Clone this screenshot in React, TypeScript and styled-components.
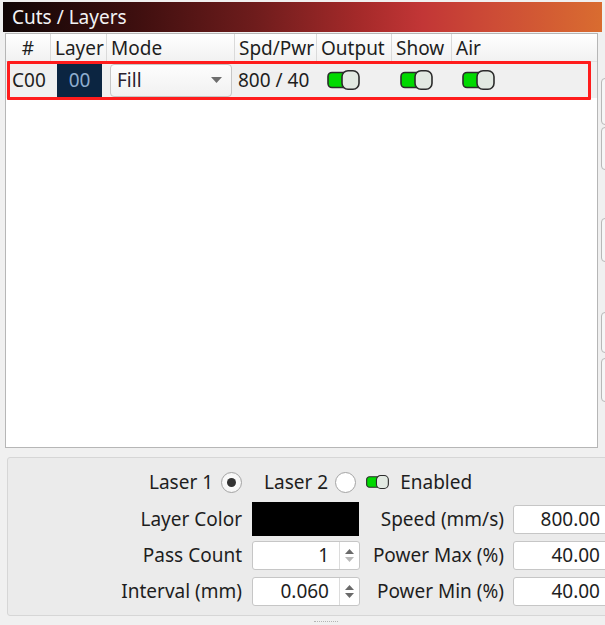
import React from "react";
import styled, { createGlobalStyle } from "styled-components";

const Global = createGlobalStyle`
  html, body { margin: 0; padding: 0; background: #f0f0f0; }
  body { font-family: "Noto Sans", "Open Sans", sans-serif; color: #1e1e1e; }
  * { box-sizing: border-box; }
`;

const Page = styled.div`
  width: 605px;
  height: 625px;
  overflow: hidden;
  background: #f0f0f0;
  padding-top: 2px;
  font-size: 19px;
`;

const TitleBar = styled.div`
  margin-left: 3px;
  width: 599px;
  height: 30px;
  padding-left: 9px;
  display: flex;
  align-items: center;
  color: #f2f2f4;
  font-size: 19px;
  background: linear-gradient(
    to right,
    #100606 0%,
    #3e0f0f 22%,
    #6e1c1c 42%,
    #a62a2a 60%,
    #c23636 70%,
    #cd4c36 82%,
    #d96c30 100%
  );
`;

const Middle = styled.div`
  display: flex;
  margin-top: 1px;
`;

const Table = styled.div`
  position: relative;
  flex-shrink: 0;
  margin-left: 5px;
  width: 593px;
  height: 415px;
  border: 1px solid #b6b6b6;
  background: #ffffff;
  display: flex;
  flex-direction: column;
`;

const COLS = "45px 56px 128px 82px 75px 60px 1fr";

const HeaderRow = styled.div`
  display: grid;
  grid-template-columns: ${COLS};
  height: 28px;
  background: linear-gradient(#ffffff, #f1f1f1);
  border-bottom: 1px solid #e2e2e2;
`;

const HeadCell = styled.div<{ $center?: boolean }>`
  border-right: 1px solid #dadada;
  padding-left: ${(p) => (p.$center ? 0 : 4)}px;
  text-align: ${(p) => (p.$center ? "center" : "left")};
  line-height: 28px;
  white-space: nowrap;
  overflow: hidden;
  &:last-child { border-right: none; }
`;

const DataRow = styled.div`
  display: grid;
  grid-template-columns: ${COLS};
  height: 36px;
  align-items: center;
  background: #f0f0f0;
`;

const Cell = styled.div<{ $pl?: number }>`
  padding-left: ${(p) => p.$pl ?? 0}px;
  display: flex;
  align-items: center;
  white-space: nowrap;
`;

const LayerBox = styled.div`
  width: 45px;
  height: 35px;
  background: #0b2541;
  color: #8fadcf;
  display: flex;
  align-items: center;
  justify-content: center;
`;

const Combo = styled.div`
  width: 122px;
  height: 33px;
  border: 1px solid #c6c6c6;
  border-radius: 4px;
  background: linear-gradient(#fdfdfd, #f1f1f1);
  display: flex;
  align-items: center;
  justify-content: space-between;
  padding: 0 9px 0 6px;
  color: #2a2230;
`;

const Highlight = styled.div`
  position: absolute;
  left: 1px;
  top: 27px;
  width: 584px;
  height: 39px;
  border: 3px solid #ff1c1c;
  border-radius: 1px;
  pointer-events: none;
`;

const SideStrip = styled.div`
  flex-shrink: 0;
  margin-left: 3px;
  display: flex;
  flex-direction: column;
`;

const SideButton = styled.div<{ $h: number; $mt: number }>`
  width: 30px;
  height: ${(p) => p.$h}px;
  margin-top: ${(p) => p.$mt}px;
  border: 1px solid #b8b8b8;
  border-radius: 4px;
  background: #f6f6f6;
`;

const Panel = styled.div`
  margin-top: 9px;
  margin-left: 7px;
  width: 620px;
  height: 159px;
  background: #ebebeb;
  border: 1px solid #d6d6d6;
  border-radius: 3px;
  padding-top: 13px;
`;

const LaserRow = styled.div`
  display: flex;
  align-items: center;
  height: 22px;
  padding-left: 141px;
`;

const Label = styled.span<{ $mr: number }>`
  margin-right: ${(p) => p.$mr}px;
  white-space: nowrap;
  display: flex;
  align-items: center;
`;

const Radio = styled.div<{ $checked?: boolean; $mr: number }>`
  width: 21px;
  height: 21px;
  border-radius: 50%;
  border: 1px solid #a4a4a4;
  background: ${(p) => (p.$checked ? "radial-gradient(#ffffff, #f2f2f2)" : "#ffffff")};
  margin-right: ${(p) => p.$mr}px;
  display: flex;
  align-items: center;
  justify-content: center;
  &::after {
    content: "";
    display: ${(p) => (p.$checked ? "block" : "none")};
    width: 9px;
    height: 9px;
    border-radius: 50%;
    background: #333333;
  }
`;

const FormGrid = styled.div`
  margin-top: 8px;
  display: grid;
  grid-template-columns: 244px 108px 153px 95px;
  grid-auto-rows: 36px;
  align-items: center;
`;

const FieldLabel = styled.div<{ $pr: number }>`
  text-align: right;
  padding-right: ${(p) => p.$pr}px;
  white-space: nowrap;
`;

const ColorSwatch = styled.div`
  width: 107px;
  height: 34px;
  background: #000000;
`;

const TextBox = styled.div`
  height: 29px;
  background: #ffffff;
  border: 1px solid #c6c6c6;
  border-radius: 3px;
  display: flex;
  align-items: center;
  justify-content: flex-end;
  padding-right: 7px;
`;

const SpinBox = styled.div`
  width: 108px;
  height: 29px;
  background: #ffffff;
  border: 1px solid #c6c6c6;
  border-radius: 3px;
  display: flex;
`;

const SpinValue = styled.div`
  flex: 1;
  display: flex;
  align-items: center;
  justify-content: flex-end;
  padding-right: 10px;
`;

const SpinArrows = styled.div`
  width: 20px;
  border-left: 1px solid #dcdcdc;
  display: flex;
  flex-direction: column;
  align-items: center;
  justify-content: center;
  gap: 3px;
`;

const Grip = styled.div`
  margin-left: 314px;
  margin-top: 5px;
  width: 24px;
  border-top: 1px dotted #b4b4b4;
`;

const Toggle: React.FC<{ w: number; h: number }> = ({ w, h }) => (
  <svg width={w} height={h} viewBox="0 0 33 20">
    <rect x="1" y="2.5" width="24" height="15" rx="4" fill="#00d900" stroke="#2b2b2b" strokeWidth="1.6" />
    <rect x="15" y="0.8" width="17" height="18.4" rx="6" fill="#e2e9e2" stroke="#2b2b2b" strokeWidth="1.6" />
  </svg>
);

const Caret = () => (
  <svg width="11" height="6" viewBox="0 0 11 6">
    <path d="M0 0 L11 0 L5.5 6 Z" fill="#6e6e6e" />
  </svg>
);

const Arrow: React.FC<{ up?: boolean; color: string }> = ({ up, color }) => (
  <svg width="9" height="5" viewBox="0 0 9 5">
    <path d={up ? "M0 5 L9 5 L4.5 0 Z" : "M0 0 L9 0 L4.5 5 Z"} fill={color} />
  </svg>
);

const sideButtons = [
  { h: 47, mt: 45 },
  { h: 43, mt: 2 },
  { h: 44, mt: 48 },
  { h: 41, mt: 50 },
  { h: 44, mt: 5 },
];

export default function App() {
  return (
    <>
      <Global />
      <Page>
        <TitleBar>Cuts / Layers</TitleBar>
        <Middle>
          <Table>
            <HeaderRow>
              <HeadCell $center>#</HeadCell>
              <HeadCell>Layer</HeadCell>
              <HeadCell>Mode</HeadCell>
              <HeadCell>Spd/Pwr</HeadCell>
              <HeadCell>Output</HeadCell>
              <HeadCell>Show</HeadCell>
              <HeadCell>Air</HeadCell>
            </HeaderRow>
            <DataRow>
              <Cell $pl={6}>C00</Cell>
              <Cell $pl={6}>
                <LayerBox>00</LayerBox>
              </Cell>
              <Cell $pl={3}>
                <Combo>
                  <span>Fill</span>
                  <Caret />
                </Combo>
              </Cell>
              <Cell $pl={3}>800 / 40</Cell>
              <Cell $pl={10}>
                <Toggle w={33} h={20} />
              </Cell>
              <Cell $pl={8}>
                <Toggle w={33} h={20} />
              </Cell>
              <Cell $pl={10}>
                <Toggle w={33} h={20} />
              </Cell>
            </DataRow>
            <Highlight />
          </Table>
          <SideStrip>
            {sideButtons.map((b, i) => (
              <SideButton key={i} $h={b.h} $mt={b.mt} />
            ))}
          </SideStrip>
        </Middle>
        <Panel>
          <LaserRow>
            <Label $mr={8}>Laser 1</Label>
            <Radio $checked $mr={22} />
            <Label $mr={7}>Laser 2</Label>
            <Radio $mr={9} />
            <Label $mr={10}>
              <Toggle w={25} h={14} />
            </Label>
            <Label $mr={0}>Enabled</Label>
          </LaserRow>
          <FormGrid>
            <FieldLabel $pr={10}>Layer Color</FieldLabel>
            <ColorSwatch />
            <FieldLabel $pr={9}>Speed (mm/s)</FieldLabel>
            <TextBox>800.00</TextBox>

            <FieldLabel $pr={10}>Pass Count</FieldLabel>
            <SpinBox>
              <SpinValue>1</SpinValue>
              <SpinArrows>
                <Arrow up color="#6a6a6a" />
                <Arrow color="#b8b8b8" />
              </SpinArrows>
            </SpinBox>
            <FieldLabel $pr={9}>Power Max (%)</FieldLabel>
            <TextBox>40.00</TextBox>

            <FieldLabel $pr={10}>Interval (mm)</FieldLabel>
            <SpinBox>
              <SpinValue>0.060</SpinValue>
              <SpinArrows>
                <Arrow up color="#6a6a6a" />
                <Arrow color="#6a6a6a" />
              </SpinArrows>
            </SpinBox>
            <FieldLabel $pr={9}>Power Min (%)</FieldLabel>
            <TextBox>40.00</TextBox>
          </FormGrid>
        </Panel>
        <Grip />
      </Page>
    </>
  );
}
